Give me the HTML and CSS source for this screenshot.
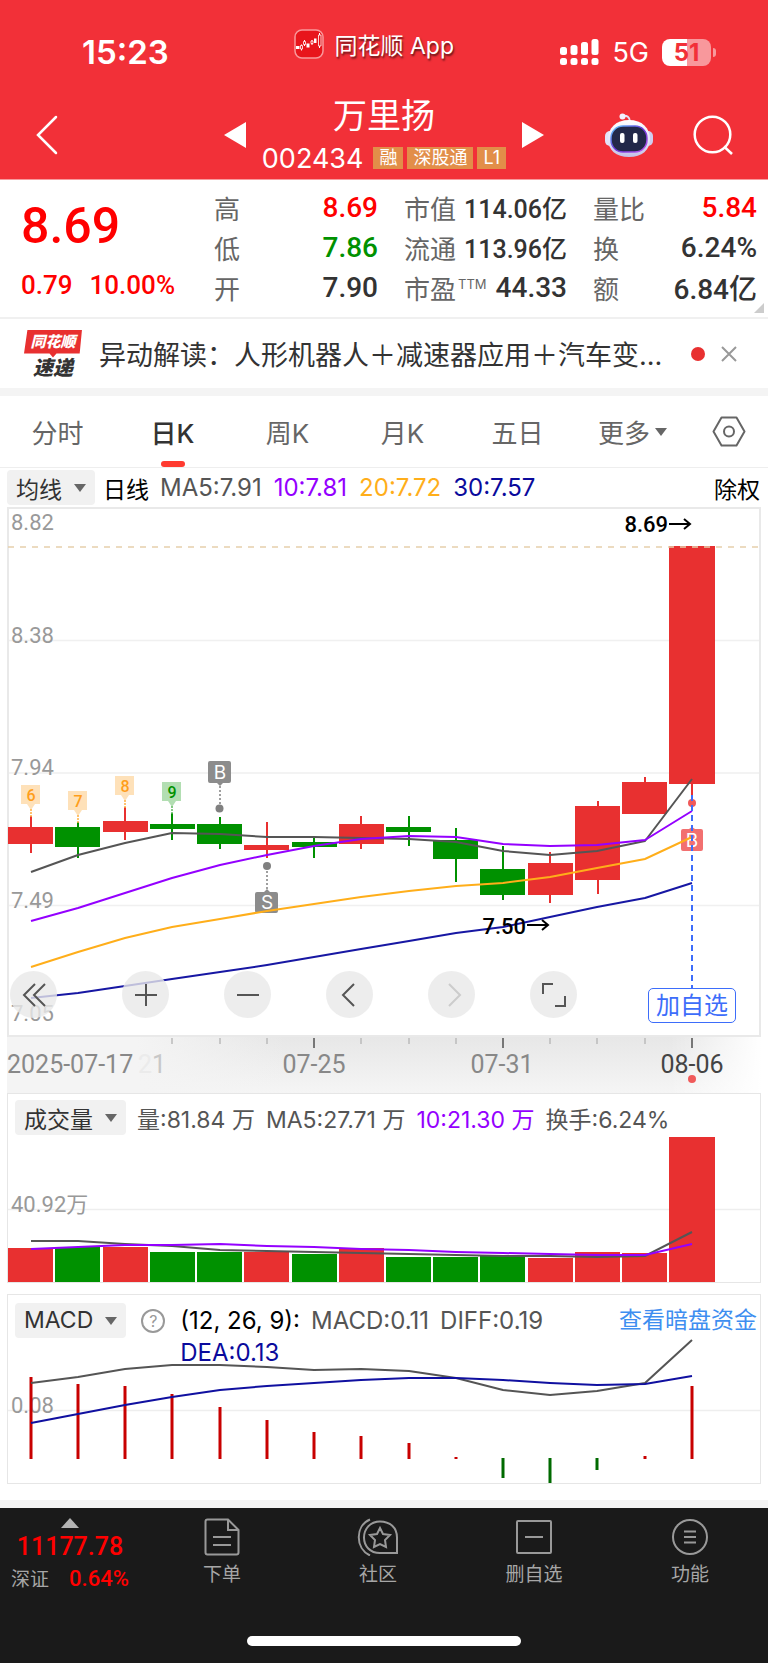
FILE: index.html
```html
<!DOCTYPE html>
<html lang="zh-CN">
<head>
  <meta charset="UTF-8" />
  <meta name="viewport" content="width=device-width, initial-scale=1.0"/>
  <title>万里扬 002434</title>
  <link rel="stylesheet" href="styles.css">
</head>
<body>

  <header>
    <div class="status-bar">
      <span class="time">15:23</span>
      <div class="app-name">
        <svg width="30" height="30" viewBox="0 0 30 30">
          <rect x="1" y="1" width="28" height="28" rx="7" fill="#e8151c" stroke="#f9989b" stroke-width="1.5"/>
          <path d="M2 17h3.500v3H2zM12.500 14.500h3v4h-3zM20 9.500h2.500v4.500H20z" fill="#fff"/>
          <path d="M7.500 15.500v6M10.500 11v6M18 11v5M25.500 4v15" stroke="#fff" stroke-width="1"/>
          <path d="M6.500 16.500h2v3.500h-2zM9.500 12.500h2v3h-2zM17 12h2v2.500h-2zM24.500 6h2.500v11h-2.500z" fill="#e8151c" stroke="#fff" stroke-width=".8"/>
        </svg>
        <span>同花顺 App</span>
      </div>
      <div class="signals">
        <svg width="39" height="28" viewBox="0 0 39 28" fill="#fff">
          <rect x="0" y="9" width="7" height="8" rx="2.500"/>
          <rect x="10.500" y="7" width="7" height="10" rx="2.500"/>
          <rect x="21" y="4" width="7" height="13" rx="2.500"/>
          <rect x="31.500" y="1" width="7" height="16" rx="2.500"/>
          <rect x="0" y="20" width="7" height="7" rx="2.500"/>
          <rect x="10.500" y="20" width="7" height="7" rx="2.500"/>
          <rect x="21" y="20" width="7" height="7" rx="2.500"/>
          <rect x="31.500" y="20" width="7" height="7" rx="2.500"/>
        </svg>
        <span class="network">5G</span>
        <span class="battery">51</span>
      </div>
    </div>

    <div class="title-bar">
      <button class="icon-btn back" aria-label="返回">
        <svg width="24" height="40" viewBox="0 0 24 40"><path d="M21 2 3 20l18 18" fill="none" stroke="#fff" stroke-width="2.500" stroke-linecap="round"/></svg>
      </button>
      <div class="stock">
        <button class="icon-btn" aria-label="上一只">
          <svg width="22" height="26" viewBox="0 0 22 26"><path d="M22 0v26L0 13z" fill="#fff"/></svg>
        </button>
        <div class="stock-name">
          <h1>万里扬</h1>
          <p><span class="code">002434</span><span class="tag">融</span><span class="tag">深股通</span><span class="tag">L1</span></p>
        </div>
        <button class="icon-btn" aria-label="下一只">
          <svg width="22" height="26" viewBox="0 0 22 26"><path d="M0 0v26l22-13z" fill="#fff"/></svg>
        </button>
      </div>
      <div class="title-tools">
        <button class="icon-btn" aria-label="助手">
          <svg width="48" height="44" viewBox="0 0 48 44">
            <defs>
              <linearGradient id="shell" x1="0" y1="0" x2="0" y2="1"><stop offset="0" stop-color="#fff"/><stop offset=".6" stop-color="#e3e2f7"/><stop offset="1" stop-color="#c3c0e6"/></linearGradient>
              <linearGradient id="rim" x1="0" y1="0" x2="1" y2="1"><stop offset="0" stop-color="#5fd0ff"/><stop offset=".5" stop-color="#6a35d9"/><stop offset="1" stop-color="#c05cf0"/></linearGradient>
            </defs>
            <path d="M17 3c5-1 8 1 8 6" fill="none" stroke="#e3e2f7" stroke-width="2"/>
            <circle cx="17.500" cy="3.500" r="3" fill="#f3f1ff"/>
            <rect x="0" y="18" width="10" height="15" rx="5" fill="#e3e2f7"/>
            <rect x="38" y="18" width="10" height="15" rx="5" fill="#d0cdf0"/>
            <path d="M24 7c13 0 21 8 21 19S37 44 24 44 3 37 3 26 11 7 24 7z" fill="url(#shell)"/>
            <rect x="6" y="13" width="36" height="26" rx="12" fill="#222849" stroke="url(#rim)" stroke-width="1.500"/>
            <rect x="15" y="20" width="4.500" height="10" rx="2" fill="#fff"/>
            <rect x="28" y="20" width="4.500" height="10" rx="2" fill="#fff"/>
          </svg>
        </button>
        <button class="icon-btn" aria-label="搜索">
          <svg width="40" height="40" viewBox="0 0 40 40"><g fill="none" stroke="#fff" stroke-width="2.500"><circle cx="19.500" cy="19.500" r="17.800"/><path d="M31 31.500l8 7.500"/></g></svg>
        </button>
      </div>
    </div>
  </header>

  <section class="quote">
    <div class="price">
      <strong>8.69</strong>
      <p><span>0.79</span><span>10.00%</span></p>
    </div>
    <dl>
      <div><dt>高</dt><dd class="up">8.69</dd></div>
      <div><dt>低</dt><dd class="down">7.86</dd></div>
      <div><dt>开</dt><dd>7.90</dd></div>
    </dl>
    <dl>
      <div><dt>市值</dt><dd class="small">114.06亿</dd></div>
      <div><dt>流通</dt><dd class="small">113.96亿</dd></div>
      <div><dt>市盈<sup>TTM</sup></dt><dd>44.33</dd></div>
    </dl>
    <dl>
      <div><dt>量比</dt><dd class="up">5.84</dd></div>
      <div><dt>换</dt><dd>6.24%</dd></div>
      <div><dt>额</dt><dd>6.84亿</dd></div>
    </dl>
    <i class="corner"></i>
  </section>

  <section class="news">
    <div class="news-logo"><b>同花顺</b><em>速递</em></div>
    <a href="#">异动解读：人形机器人＋减速器应用＋汽车变...</a>
    <i class="dot"></i>
    <button class="icon-btn" aria-label="关闭">
      <svg width="16" height="16" viewBox="0 0 16 16"><path d="M1 1l14 14M15 1L1 15" stroke="#999" stroke-width="2"/></svg>
    </button>
  </section>

  <nav class="periods">
    <a href="#">分时</a>
    <a href="#" class="active">日K</a>
    <a href="#">周K</a>
    <a href="#">月K</a>
    <a href="#">五日</a>
    <a href="#">更多<i class="caret"></i></a>
    <button class="icon-btn" aria-label="设置">
      <svg width="34" height="31" viewBox="0 0 34 31"><g fill="none" stroke="#666" stroke-width="2"><path d="M9.500 1.500h15l8 14-8 14h-15l-8-14z" stroke-linejoin="round"/><circle cx="17" cy="15.500" r="5"/></g></svg>
    </button>
  </nav>

  <main>
    <div class="legend ma-legend">
      <button class="picker">均线<i class="caret"></i></button>
      <span class="black">日线</span>
      <p>
        <span>MA5:7.91</span>
        <span class="purple">10:7.81</span>
        <span class="orange">20:7.72</span>
        <span class="navy">30:7.57</span>
      </p>
      <a href="#" class="black">除权</a>
    </div>

    <div class="chart">
      <svg viewBox="0 0 768 530">
        <g stroke="#f0f0f0" stroke-width="1.500"><path d="M8 133.500h752M8 266h752M8 398.500h752"/></g>
        <rect x="8" y="1" width="752" height="528" fill="none" stroke="#e9e9e9" stroke-width="2"/>
        <g class="axis-label">
          <text x="11" y="23">8.82</text>
          <text x="11" y="136">8.38</text>
          <text x="11" y="268">7.94</text>
          <text x="11" y="401">7.49</text>
          <text x="11" y="514">7.05</text>
        </g>

        <!-- candles, 47.2 apart -->
        <g fill="#e83030">
          <path d="M30 309h2v37h-2zM124 300h2v33h-2zM266 315h2v36h-2zM360 309h2v33h-2zM549 345h2v51h-2zM597 294h2v93h-2zM644 270h2v20h-2zM691 270h2v24h-2z"/>
          <rect x="8" y="320" width="45" height="17"/>
          <rect x="103" y="314" width="45" height="11"/>
          <rect x="244" y="338" width="45" height="5"/>
          <rect x="339" y="317" width="45" height="20"/>
          <rect x="528" y="356" width="45" height="32"/>
          <rect x="575" y="299" width="45" height="74"/>
          <rect x="622" y="275" width="45" height="32"/>
          <rect x="669" y="39" width="46" height="238"/>
        </g>
        <g fill="#009100">
          <path d="M77 315h2v36h-2zM171 306h2v27h-2zM219 310h2v32h-2zM313 331h2v20h-2zM408 309h2v30h-2zM455 321h2v54h-2zM502 339h2v54h-2z"/>
          <rect x="55" y="320" width="45" height="20"/>
          <rect x="150" y="317" width="45" height="5"/>
          <rect x="197" y="317" width="45" height="20"/>
          <rect x="292" y="335" width="45" height="5"/>
          <rect x="386" y="320" width="45" height="5"/>
          <rect x="433" y="333" width="45" height="19"/>
          <rect x="480" y="362" width="45" height="26"/>
        </g>
        <path d="M8 40h752" stroke="#e6d0ac" stroke-width="1.500" stroke-dasharray="6 6"/>

        <!-- nine-turn flags -->
        <g class="flag">
          <path d="M22 278h18v19h-5l-4 6-4-6h-6v-19zM69 284h18v19h-5l-4 6-4-6h-6v-19zM116 269h18v19h-5l-4 6-4-6h-6v-19z" fill="#fee1b9"/>
          <path d="M31 302v8M78 308v8M125 293v8" stroke="#ffb040" stroke-width="1.500" stroke-dasharray="2 1"/>
          <path d="M163 275h18v19h-5l-4 6-4-6h-6v-19z" fill="#b2deb2"/>
          <path d="M172 299v8" stroke="#5fb95f" stroke-width="1.500" stroke-dasharray="2 1"/>
          <text x="31" y="294" fill="#ff9e1b">6</text>
          <text x="78" y="300" fill="#ff9e1b">7</text>
          <text x="125" y="285" fill="#ff9e1b">8</text>
          <text x="172" y="291" fill="#009100">9</text>
        </g>

        <!-- buy / sell marks -->
        <g class="mark">
          <path d="M210 254h19q2 0 2 2v18q0 2-2 2h-6l-3 3-3-3h-7q-2 0-2-2v-18q0-2 2-2zM257 406h19q2 0 2-2v-17q0-2-2-2h-6l-3-3-3 3h-7q-2 0-2 2v17q0 2 2 2z" fill="#8c8c8c"/>
          <circle cx="219.500" cy="301.500" r="4" fill="#808080"/>
          <circle cx="267" cy="359" r="4" fill="#808080"/>
          <path d="M220 279v18M267 364v20" stroke="#808080" stroke-width="1.500" stroke-dasharray="2 2"/>
          <text x="220" y="272">B</text>
          <text x="267" y="402">S</text>
        </g>

        <g fill="none" stroke-width="2" stroke-linejoin="round">
          <polyline stroke="#555" points="31,365 78,348 125,336 172,326 220,327 267,330 314,330 361,331 409,332 456,335 503,344 550,348 597,344 645,334 692,272"/>
          <polyline stroke="#9400ff" points="31,414 78,401 125,386 172,371 220,358 267,348 314,339 361,332 409,329 456,330 503,337 550,339 597,338 645,333 692,304"/>
          <polyline stroke="#1717a3" points="31,491 78,486 125,479 172,472 220,465 267,458 314,450 361,442 409,434 456,426 503,420 550,410 597,400 645,391 692,376"/>
        </g>
        <g class="mark">
          <path d="M692 320l3 2h6q2 0 2 2v18q0 2-2 2h-18q-2 0-2-2v-18q0-2 2-2h6z" fill="#f27070"/>
          <circle cx="692" cy="296" r="4" fill="#f05a5a"/>
          <text x="692" y="340">B</text>
        </g>
        <polyline fill="none" stroke="#ffae1a" stroke-width="2" points="31,460 78,445 125,431 172,420 220,412 267,404 314,397 361,390 409,384 456,379 503,376 550,370 597,361 645,352 692,330"/>
        <path d="M692 288v193" stroke="#3d6dfa" stroke-width="2" stroke-dasharray="6 4"/>

        <g class="extreme">
          <text x="668" y="25">8.69</text>
          <text x="526" y="427">7.50</text>
          <path d="M669 17h21M684 12l6 5-6 5M527 418h21M542 413l6 5-6 5"/>
        </g>
      </svg>
      <div class="chart-tools">
        <button aria-label="到最左"><svg viewBox="0 0 24 24"><path d="M13 1 2 12l11 11M23 1 12 12l11 11"/></svg></button>
        <button aria-label="放大"><svg viewBox="0 0 24 24"><path d="M12 1v22M1 12h22"/></svg></button>
        <button aria-label="缩小"><svg viewBox="0 0 24 24"><path d="M1 12h22"/></svg></button>
        <button aria-label="左移"><svg viewBox="0 0 24 24"><path d="M16 1 5 12l11 11"/></svg></button>
        <button aria-label="右移" disabled><svg viewBox="0 0 24 24"><path d="M9 1l11 11L9 23"/></svg></button>
        <button aria-label="全屏"><svg viewBox="0 0 24 24"><path d="M1 11V1h10M23 13v10H13"/></svg></button>
      </div>
      <button class="add-btn">加自选</button>
    </div>

    <div class="dates">
      <svg viewBox="0 0 768 56">
        <defs>
          <linearGradient id="shade" x1="0" y1="0" x2="0" y2="1"><stop offset="0" stop-color="#e7e7e7"/><stop offset="1" stop-color="#f5f5f5"/></linearGradient>
          <linearGradient id="fadeLeft"><stop offset="0" stop-color="#f4f4f4"/><stop offset="1" stop-color="#f4f4f4" stop-opacity="0"/></linearGradient>
          <linearGradient id="fadeRight"><stop offset="0" stop-color="#fff" stop-opacity="0"/><stop offset="1" stop-color="#fff"/></linearGradient>
        </defs>
        <rect x="7" y="0" width="754" height="56" fill="url(#shade)"/>
        <rect x="7" y="0" width="130" height="56" fill="#f4f4f4"/>
        <rect x="136" y="0" width="150" height="56" fill="url(#fadeLeft)"/>
        <rect x="670" y="0" width="92" height="56" fill="url(#fadeRight)"/>
        <path d="M172 1v6M220 1v6M267 1v6M361 1v6M409 1v6M456 1v6M550 1v6M597 1v6M645 1v6" stroke="#bbb" stroke-width="1.500"/>
        <path d="M314 1v10M503 1v10M692 1v10" stroke="#777" stroke-width="2"/>
        <text x="138" y="36" fill="#ebebeb">2<tspan fill="#c8c8c8">1</tspan></text>
        <text x="7" y="36">2025-07-17</text>
        <text x="314" y="36" text-anchor="middle">07-25</text>
        <text x="502" y="36" text-anchor="middle">07-31</text>
        <text x="692" y="36" text-anchor="middle" fill="#444">08-06</text>
        <circle cx="692" cy="42" r="4" fill="#f05a5a"/>
      </svg>
    </div>

    <div class="panel volume">
      <div class="legend">
        <button class="picker">成交量<i class="caret"></i></button>
        <span>量:81.84 万</span>
        <span>MA5:27.71 万</span>
        <span class="purple">10:21.30 万</span>
        <span>换手:6.24%</span>
      </div>
      <svg viewBox="8 0 752 145">
        <path d="M8 72.500h752" stroke="#eee" stroke-width="1.500"/>
        <text class="axis-label" x="11" y="75">40.92万</text>
        <g fill="#e83030">
          <rect x="8" y="111" width="45" height="34"/>
          <rect x="103" y="110" width="45" height="35"/>
          <rect x="244" y="115" width="45" height="30"/>
          <rect x="339" y="111" width="45" height="34"/>
          <rect x="528" y="121" width="45" height="24"/>
          <rect x="575" y="115" width="45" height="30"/>
          <rect x="622" y="116" width="45" height="29"/>
          <rect x="669" y="0" width="46" height="145"/>
        </g>
        <g fill="#009100">
          <rect x="55" y="110" width="45" height="35"/>
          <rect x="150" y="115" width="45" height="30"/>
          <rect x="197" y="115" width="45" height="30"/>
          <rect x="292" y="117" width="45" height="28"/>
          <rect x="386" y="120" width="45" height="25"/>
          <rect x="433" y="120" width="45" height="25"/>
          <rect x="480" y="119" width="45" height="26"/>
        </g>
        <g fill="none" stroke-width="2">
          <polyline stroke="#555" points="31,104 78,104 125,107 172,109 220,113 267,114 314,115 361,116 409,117 456,118 503,119 550,119 597,120 645,119 692,95"/>
          <polyline stroke="#9400ff" points="31,112 78,110 125,108 172,108 220,107 267,109 314,110 361,112 409,113 456,115 503,116 550,117 597,118 645,118 692,107"/>
        </g>
      </svg>
    </div>

    <div class="panel macd">
      <svg viewBox="8 0 752 188">
        <path d="M8 115.500h752" stroke="#eee" stroke-width="1.500"/>
        <text class="axis-label" x="11" y="118">0.08</text>
        <path d="M31 82v82M78 89v75M125 91v73M172 99v65M220 112v52M267 125v39M314 137v27M361 141v23M409 148v16M456 162v2M645 161v3M692 91v73" stroke="#c80000" stroke-width="3"/>
        <path d="M503 163v20M550 163v25M597 163v12" stroke="#006a00" stroke-width="3"/>
        <g fill="none" stroke-width="2">
          <polyline stroke="#555" points="31,88 78,82 125,74 172,70 220,70 267,72 314,75 361,74 409,76 456,83 503,95 550,100 597,96 645,88 692,45"/>
          <polyline stroke="#1010a0" points="31,128 78,119 125,110 172,102 220,95 267,91 314,88 361,85 409,83 456,83 503,85 550,88 597,90 645,89 692,81"/>
        </g>
      </svg>
      <div class="legend">
        <button class="picker">MACD<i class="caret"></i></button>
        <button class="help" aria-label="说明">?</button>
        <p>
          <span class="black">(12, 26, 9):</span>
          <span>MACD:0.11</span>
          <span>DIFF:0.19</span>
          <span class="navy">DEA:0.13</span>
        </p>
        <a href="#">查看暗盘资金</a>
      </div>
    </div>
  </main>

  <footer>
    <div class="toolbar">
      <a href="#" class="index">
        <i class="caret-up"></i>
        <strong>11177.78</strong>
        <p>深证<span>0.64%</span></p>
      </a>
      <a href="#">
        <svg width="36" height="38" viewBox="0 0 36 38"><path d="M24 1.500H3.500q-2 0-2 2v31q0 2 2 2h29q2 0 2-2V12zM24 1.500V12h10.500M9 19h18M9 27h18"/></svg>
        下单
      </a>
      <a href="#">
        <svg width="42" height="38" viewBox="0 0 42 38"><path d="M23 3.500c10 0 17 6 17 16V35H23C13 35 7 28 7 19.500S13 3.500 23 3.500zM13 1.500C-2 8-2 30 13 37.500M23 10l3 6 7 1-5 5 1 7-6-3-6 3 1-7-5-5 7-1z"/></svg>
        社区
      </a>
      <a href="#">
        <svg width="38" height="38" viewBox="0 0 38 38"><path d="M3 3h32q1 0 1 1v30q0 1-1 1H3q-1 0-1-1V4q0-1 1-1zM10 19h18"/></svg>
        删自选
      </a>
      <a href="#">
        <svg width="38" height="38" viewBox="0 0 38 38"><circle cx="19" cy="19" r="17"/><path d="M13 13.500h12M13 19h12M13 24.500h12"/></svg>
        功能
      </a>
    </div>
    <div class="home-bar"></div>
  </footer>

</body>
</html>
```

FILE: styles.css
```css
* {
  margin: 0;
  padding: 0;
  box-sizing: border-box;
}

body {
  font-family: Inter, 'Noto Sans CJK SC', sans-serif;
  background-color: #fff;
  color: #333;
}

a {
  color: inherit;
  text-decoration: none;
}

button {
  font: inherit;
  color: inherit;
  border: none;
  background: none;
  cursor: pointer;
}

svg {
  display: block;
}

.icon-btn {
  display: flex;
  justify-content: center;
  align-items: center;
}

.price,
dd,
.index,
.axis-label,
.extreme,
.flag,
.dates {
  font-family: Roboto, 'Noto Sans CJK SC', sans-serif;
}

.caret {
  border: 6px solid transparent;
  border-top: 8px solid #666;
  border-bottom: none;
}

/* header */
header {
  height: 180px;
  background-color: #f23038;
  border-bottom: 1px solid #f79a9d;
  color: #fff;
}

.status-bar,
.title-bar {
  display: grid;
  grid-template-columns: 1fr auto 1fr;
  align-items: center;
}

.status-bar {
  grid-template-columns: 1fr auto 257px;
  height: 92px;
  padding: 12px 57px 0 82px;
}

.time {
  font-size: 33px;
  font-weight: 600;
}

.app-name {
  display: flex;
  align-items: center;
  gap: 10px;
  margin-bottom: 16px;
  font-size: 23px;
  text-shadow: 1px 2px 2px rgba(0, 0, 0, 0.6);
}

.signals {
  display: flex;
  justify-content: flex-end;
  align-items: center;
  gap: 13px;
}

.network {
  font-size: 27px;
}

.battery {
  position: relative;
  width: 49px;
  height: 27px;
  border-radius: 8px;
  background: linear-gradient(to right, #fff 51%, #f8989c 51%);
  color: #f23038;
  font-size: 24px;
  font-weight: 700;
  line-height: 27px;
  text-align: center;
}

.battery::after {
  content: "";
  position: absolute;
  right: -5px;
  top: 9px;
  width: 3px;
  height: 9px;
  border-radius: 0 3px 3px 0;
  background-color: #f8989c;
}

.title-bar {
  height: 86px;
  padding: 0 35px;
}

.back {
  justify-self: start;
}

.stock {
  display: flex;
  align-items: center;
  gap: 16px;
}

.stock-name {
  padding-top: 2px;
  text-align: center;
}

.stock-name h1 {
  font-size: 34px;
  font-weight: 400;
  line-height: 44px;
}

.stock-name p {
  display: flex;
  align-items: center;
  gap: 4px;
  height: 40px;
}

.code {
  margin-right: 6px;
  font-size: 27px;
}

.tag {
  padding: 0 6px;
  background-color: #e28e49;
  font-size: 18px;
  line-height: 22px;
}

.title-tools {
  display: flex;
  justify-content: flex-end;
  align-items: center;
  gap: 40px;
}

/* quote */
.quote {
  position: relative;
  display: grid;
  grid-template-columns: 1fr 164px 163px 164px;
  column-gap: 26px;
  padding: 7px 11px 10px 21px;
  border-bottom: 2px solid #f0f0f0;
}

.price {
  color: #f00;
}

.price strong {
  display: block;
  font-size: 50px;
  font-weight: 500;
  line-height: 78px;
}

.price p {
  display: flex;
  gap: 17px;
  font-size: 26px;
  font-weight: 500;
  line-height: 40px;
}

.quote dl div {
  display: flex;
  justify-content: space-between;
  align-items: center;
  height: 40px;
  white-space: nowrap;
}

dt {
  color: #666;
  font-size: 26px;
}

dt sup {
  margin-left: 2px;
  font-size: 13px;
}

dd {
  font-size: 28px;
  font-weight: 500;
}

dd.small {
  font-size: 25px;
}

.up {
  color: #f00;
}

.down {
  color: #009100;
}

.corner {
  position: absolute;
  right: 4px;
  bottom: 4px;
  border-left: 10px solid transparent;
  border-bottom: 10px solid #ccc;
}

/* news */
.news {
  display: flex;
  align-items: center;
  height: 77px;
  padding: 0 31px 0 24px;
  border-bottom: 8px solid #f4f4f4;
}

.news-logo {
  width: 58px;
  margin-right: 17px;
  font-weight: 900;
  font-style: italic;
  text-align: center;
}

.news-logo b,
.news-logo em {
  display: block;
}

.news-logo b {
  padding-bottom: 4px;
  background-color: #e83030;
  clip-path: polygon(6% 0, 100% 0, 96% 86%, 56% 86%, 50% 100%, 44% 86%, 0 86%);
  color: #fff;
  font-size: 15px;
  line-height: 24px;
}

.news-logo em {
  font-size: 20px;
  line-height: 20px;
}

.news a {
  flex: 1;
  white-space: nowrap;
  font-size: 27px;
}

.dot {
  width: 14px;
  height: 14px;
  margin: 0 16px 0 24px;
  border-radius: 50%;
  background-color: #e83030;
}

/* tabs */
.periods {
  display: grid;
  grid-template-columns: repeat(6, 115fr) 78fr;
  height: 72px;
  border-bottom: 1px solid #eee;
  color: #666;
  font-size: 26px;
}

.periods a {
  position: relative;
  display: flex;
  justify-content: center;
  align-items: center;
  gap: 5px;
}

.periods .active {
  color: #333;
  font-weight: 500;
}

.periods .active::after {
  content: "";
  position: absolute;
  bottom: 0;
  width: 24px;
  height: 6px;
  border-radius: 3px;
  background-color: #ff3b30;
}

/* legends */
.legend {
  display: flex;
  align-items: center;
  gap: 11px;
  color: #555;
  font-size: 23px;
  white-space: nowrap;
}

.legend p {
  display: flex;
  gap: 0 12px;
  font-size: 24px;
}

.picker {
  display: flex;
  align-items: center;
  gap: 12px;
  height: 35px;
  padding: 0 9px;
  border-radius: 4px;
  background-color: #f1f1f1;
  color: #333;
}

.legend a {
  margin-left: auto;
}

.black {
  color: #000;
}

.purple {
  color: #9400ff;
}

.orange {
  color: #ffae1a;
}

.navy {
  color: #0a0a9c;
}

.ma-legend {
  height: 39px;
  padding: 0 8px 0 7px;
}

.ma-legend .picker {
  margin-right: -3px;
}

/* charts */
.chart {
  position: relative;
}

.chart > svg,
.dates svg,
.panel svg {
  width: 100%;
}

.axis-label {
  fill: #999;
  font-size: 22px;
}

.extreme {
  font-size: 22px;
  font-weight: 500;
  text-anchor: end;
}

.extreme path {
  fill: none;
  stroke: #000;
  stroke-width: 2;
}

.flag text {
  font-size: 16px;
  font-weight: 500;
  text-anchor: middle;
}

.mark text {
  fill: #fff;
  font-size: 19px;
  text-anchor: middle;
}

.chart-tools {
  position: absolute;
  left: 10px;
  bottom: 19px;
  display: flex;
  gap: 55px;
}

.chart-tools button {
  display: flex;
  justify-content: center;
  align-items: center;
  width: 47px;
  height: 47px;
  border-radius: 50%;
  background-color: rgba(232, 232, 232, 0.8);
}

.chart-tools button:first-child {
  margin-right: 10px;
}

.chart-tools svg {
  width: 24px;
  height: 24px;
  fill: none;
  stroke: #555;
  stroke-width: 2;
}

.chart-tools button:disabled svg {
  stroke: #ccc;
}

.add-btn {
  position: absolute;
  right: 32px;
  bottom: 14px;
  width: 88px;
  height: 35px;
  border: 1px solid #3d6dfa;
  border-radius: 5px;
  background-color: #fff;
  color: #3d6dfa;
  font-size: 24px;
  line-height: 32px;
}

.dates {
  fill: #888;
  font-size: 25px;
}

.panel {
  position: relative;
  margin: 0 7px 11px;
  border: 1px solid #e6e6e6;
}

.volume .legend {
  height: 43px;
  padding: 4px 0 0 7px;
}

.macd .legend {
  position: absolute;
  left: 7px;
  right: 3px;
  top: 8px;
  align-items: flex-start;
  line-height: 35px;
}

.macd .legend p {
  flex-wrap: wrap;
  column-gap: 11px;
  width: 400px;
  padding-top: 2px;
  line-height: 32px;
}

.macd .legend a {
  color: #3e8ef0;
}

.help {
  width: 24px;
  height: 24px;
  margin: 6px 4px 0;
  border: 2px solid #999;
  border-radius: 50%;
  color: #999;
  font-size: 16px;
  line-height: 20px;
}

/* bottom bar */
footer {
  margin-top: 16px;
  border-top: 8px solid #f4f4f4;
  background-color: #1a1a1a;
}

.toolbar {
  display: grid;
  grid-template-columns: 144px repeat(4, 1fr);
  height: 128px;
  padding-top: 10px;
}

.toolbar a {
  display: flex;
  flex-direction: column;
  align-items: center;
  gap: 6px;
  color: #a6a6a6;
  font-size: 19px;
  line-height: 26px;
}

.toolbar svg {
  fill: none;
  stroke: #999;
  stroke-width: 2;
}

.toolbar .index {
  padding-right: 4px;
}

.caret-up {
  border: 9px solid transparent;
  border-top: none;
  border-bottom: 10px solid #b3b3b3;
}

.index strong {
  color: #f00;
  font-size: 25px;
  font-weight: 500;
}

.index span {
  margin-left: 20px;
  color: #f00;
  font-size: 22px;
  font-weight: 500;
}

.home-bar {
  width: 274px;
  height: 10px;
  margin: 0 auto;
  border-radius: 5px;
  background-color: #fff;
}

footer::after {
  content: "";
  display: block;
  height: 17px;
}
```
